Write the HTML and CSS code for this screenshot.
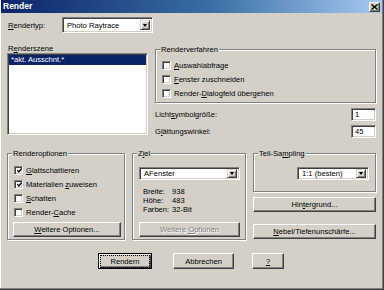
FILE: index.html
```html
<!DOCTYPE html>
<html>
<head>
<meta charset="utf-8">
<link rel="stylesheet" href="styles.css">
</head>
<body>
<div class="window">
  <div class="titlebar">
    <span class="title">Render</span>
    <span class="close"><svg width="7" height="6" viewBox="0 0 7 6"><path d="M0.5 0.5 L6.5 5.5 M6.5 0.5 L0.5 5.5" stroke="#000" stroke-width="1.4"/></svg></span>
  </div>
  <div class="content">
    <div class="row1">
      <span class="lbl-type"><u>R</u>endertyp:</span>
      <div class="combo combo-type"><span class="combo-text">Photo Raytrace</span><span class="drop"><span class="tri"></span></span></div>
    </div>

    <div class="row2">
      <div class="scene-col">
        <div class="lbl-scene">R<u>e</u>nderszene</div>
        <div class="listbox"><div class="item-sel">*akt. Ausschnt.*</div></div>
      </div>
      <div class="right-col">
        <fieldset class="group g-verf">
          <legend>Renderverfahren</legend>
          <div class="group-in verf-in">
            <div class="chk-row"><span class="chk"></span><span><u>A</u>uswahlabfrage</span></div>
            <div class="chk-row"><span class="chk"></span><span><u>F</u>enster zuschneiden</span></div>
            <div class="chk-row"><span class="chk"></span><span>Render-<u>D</u>ialogfeld übergehen</span></div>
          </div>
        </fieldset>
        <div class="field-row first"><span>Licht<u>s</u>ymbolgröße:</span><div class="textbox">1</div></div>
        <div class="field-row second"><span>G<u>l</u>ättungswinkel:</span><div class="textbox">45</div></div>
      </div>
    </div>

    <div class="row3">
      <fieldset class="group g-opt">
        <legend>Renderoptionen</legend>
        <div class="group-in opt-in">
          <div class="chk-row"><span class="chk checked"><svg width="5" height="5" viewBox="0 0 5 5"><path d="M0.3 2.2 L1.8 3.9 L4.7 0.5" fill="none" stroke="#000" stroke-width="1.3"/></svg></span><span><u>G</u>lattschattieren</span></div>
          <div class="chk-row"><span class="chk checked"><svg width="5" height="5" viewBox="0 0 5 5"><path d="M0.3 2.2 L1.8 3.9 L4.7 0.5" fill="none" stroke="#000" stroke-width="1.3"/></svg></span><span>Materialien <u>z</u>uweisen</span></div>
          <div class="chk-row"><span class="chk"></span><span><u>S</u>chatten</span></div>
          <div class="chk-row"><span class="chk"></span><span>Render-<u>C</u>ache</span></div>
          <div class="btn btn-opt"><span><u>W</u>eitere Optionen...</span></div>
        </div>
      </fieldset>

      <fieldset class="group g-ziel">
        <legend>Z<u>i</u>el</legend>
        <div class="group-in ziel-in">
          <div class="combo combo-ziel"><span class="combo-text">AFenster</span><span class="drop"><span class="tri"></span></span></div>
          <div class="info">
            <div class="info-row"><span class="info-k">Breite:</span><span>938</span></div>
            <div class="info-row"><span class="info-k">Höhe:</span><span>483</span></div>
            <div class="info-row"><span class="info-k">Farben:</span><span>32-Bit</span></div>
          </div>
          <div class="btn btn-ziel disabled"><span>Weitere <u>O</u>ptionen</span></div>
        </div>
      </fieldset>

      <div class="col3">
        <fieldset class="group g-samp">
          <legend>Teil-Sa<u>m</u>pling</legend>
          <div class="group-in samp-in">
            <div class="combo combo-samp"><span class="combo-text">1:1 (besten)</span><span class="drop"><span class="tri"></span></span></div>
          </div>
        </fieldset>
        <div class="btn btn-hint"><span>Hin<u>t</u>ergrund...</span></div>
        <div class="btn btn-nebel"><span><u>N</u>ebel/Tiefenunschärfe...</span></div>
      </div>
    </div>

    <div class="row4">
      <div class="btn btn-default btn-render"><span class="focus">Rendern</span></div>
      <div class="btn btn-abbr"><span>Abbrechen</span></div>
      <div class="btn btn-help"><span><u>?</u></span></div>
    </div>
  </div>
</div>
</body>
</html>
```

FILE: styles.css
```css
* { box-sizing: border-box; }
html, body { margin: 0; padding: 0; background: #d4d0c8; }
body {
  font-family: "Liberation Sans", Arial, sans-serif;
  font-size: 7.6px;
  line-height: 9px;
  color: #000;
}
u { text-decoration: underline; text-underline-offset: 1px; text-decoration-thickness: 1px; }

.window {
  width: 384px;
  height: 290px;
  background: #d4d0c8;
  box-shadow: inset -1px -1px #404040, inset -2px -2px #808080, inset 1px 0 #fff;
  overflow: hidden;
}

.titlebar {
  height: 13px;
  margin: 0 2px 0 1px;
  background: linear-gradient(to right, #0a246a 0%, #3a6ea5 55%, #a6caf0 100%);
  display: flex;
  align-items: center;
  justify-content: space-between;
}
.title {
  color: #fff;
  font-weight: bold;
  font-size: 8.5px;
  padding-left: 2px;
}
.close {
  width: 11px;
  height: 10px;
  margin-right: 2px;
  background: #d4d0c8;
  border: 1px solid;
  border-color: #fff #404040 #404040 #fff;
  box-shadow: inset -1px -1px #808080;
  display: flex;
  align-items: center;
  justify-content: center;
}

.content { padding: 0 8px 0 7px; }

/* controls */
.combo {
  display: flex;
  align-items: stretch;
  background: #fff;
  border: 1px solid;
  border-color: #808080 #fff #fff #808080;
  box-shadow: inset 1px 1px #404040, inset -1px -1px #d4d0c8;
  padding: 2px;
}
.combo-text { flex: 1; padding-left: 2px; display: flex; align-items: center; white-space: nowrap; }
.drop {
  width: 10px;
  background: #d4d0c8;
  border: 1px solid;
  border-color: #d4d0c8 #404040 #404040 #d4d0c8;
  box-shadow: inset 1px 1px #fff, inset -1px -1px #808080;
  display: flex;
  align-items: center;
  justify-content: center;
}
.tri {
  width: 0; height: 0;
  border-left: 2.5px solid transparent;
  border-right: 2.5px solid transparent;
  border-top: 3px solid #000;
}

.textbox {
  width: 25px;
  height: 13px;
  background: #fff;
  border: 1px solid;
  border-color: #808080 #fff #fff #808080;
  box-shadow: inset 1px 1px #404040, inset -1px -1px #d4d0c8;
  padding-left: 3px;
  display: flex;
  align-items: center;
}

.btn {
  height: 15px;
  background: #d4d0c8;
  border: 1px solid;
  border-color: #fff #404040 #404040 #fff;
  box-shadow: inset -1px -1px #808080, inset 1px 1px #d4d0c8;
  display: flex;
  align-items: center;
  justify-content: center;
  white-space: nowrap;
}
.btn.disabled { color: #808080; text-shadow: 1px 1px #fff; }

.chk-row { display: flex; align-items: center; height: 14px; gap: 3px; }
.chk {
  width: 9px;
  height: 9px;
  background: #fff;
  border: 1px solid;
  border-color: #808080 #fff #fff #808080;
  box-shadow: inset 1px 1px #404040, inset -1px -1px #d4d0c8;
  display: flex;
  align-items: center;
  justify-content: center;
  flex: none;
}
.chk svg { margin: 1px 0 0 1px; }

.group {
  margin: 0;
  padding: 0;
  min-width: 0;
  border: 1px solid #808080;
  box-shadow: inset 1px 1px #fff, 1px 1px #fff;
}
.group legend {
  margin-left: 4px;
  padding: 0 1px;
  line-height: 9px;
  background: #d4d0c8;
}

/* row 1 */
.row1 { display: flex; margin-top: 4px; height: 16px; align-items: center; }
.lbl-type { width: 55px; padding-left: 1px; }
.combo-type { width: 91px; height: 16px; }

/* row 2 */
.row2 { display: flex; gap: 7px; margin-top: 11px; }
.scene-col { width: 141px; }
.lbl-scene { height: 9px; padding-left: 1px; }
.listbox {
  height: 82px;
  background: #fff;
  border: 1px solid;
  border-color: #808080 #fff #fff #808080;
  box-shadow: inset 1px 1px #404040, inset -1px -1px #d4d0c8;
  padding: 1px 1px;
}
.item-sel {
  height: 10px;
  background: #0a246a;
  color: #fff;
  padding-left: 2px;
  line-height: 10px;
}
.right-col { width: 221px; }
.g-verf { margin-top: 1px; }
.verf-in { padding: 4px 0 2px 6px; }
.field-row { display: flex; justify-content: space-between; align-items: center; height: 13px; }
.field-row.first { margin-top: 5px; }
.field-row.second { margin-top: 4px; }

/* row 3 */
.row3 { display: flex; gap: 7px; margin-top: 11px; align-items: flex-start; }
.g-opt { width: 118px; height: 91px; }
.opt-in { padding: 5px 0 0 6px; }
.btn-opt { width: 108px; margin-top: 3px; margin-left: -1px; }
.g-ziel { width: 114px; height: 91px; }
.ziel-in { padding: 9px 0 0 6px; }
.combo-ziel { width: 101px; height: 13px; padding: 1px 2px; }
.info { margin-top: 7px; padding-left: 4px; }
.info-row { display: flex; height: 9px; }
.info-k { width: 29px; }
.btn-ziel { width: 101px; margin-top: 8px; }
.col3 { width: 123px; }
.g-samp { height: 43px; }
.samp-in { display: flex; justify-content: flex-end; padding: 9px 6px 0 0; }
.combo-samp { width: 72px; height: 13px; padding: 1px 2px; }
.btn-hint { margin-top: 5px; }
.btn-nebel { margin-top: 12px; }

/* row 4 */
.row4 { display: flex; margin-top: 13px; padding-left: 91px; }
.row4 .btn { height: 16px; }
.btn-render { width: 54px; }
.btn-abbr { width: 61px; margin-left: 21px; }
.btn-help { width: 32px; margin-left: 18px; }
.btn-default {
  border: 1px solid #000;
  box-shadow: inset 1px 1px #fff, inset -1px -1px #404040, inset -2px -2px #808080;
}
.focus { outline: 1px dotted #000; outline-offset: 1px; padding: 0 8px; }
```
